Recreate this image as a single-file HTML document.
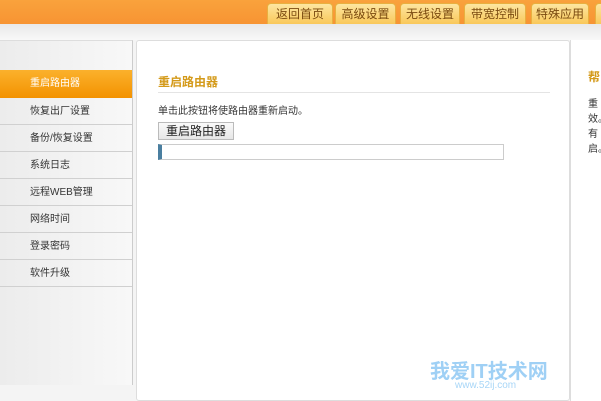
<!DOCTYPE html><html><head><meta charset="utf-8"><style>
*{margin:0;padding:0;box-sizing:border-box}
body{width:601px;height:401px;overflow:hidden;background:#f4f4f4;font-family:"Liberation Sans","Noto Sans CJK SC",sans-serif;font-size:11px;color:#333;position:relative}
.hd{position:absolute;left:0;top:0;width:601px;height:24px;background:linear-gradient(#f9a23c,#f79433)}
.tab{position:absolute;top:3px;height:21px;background:linear-gradient(#fde6a0,#f9c85a);border:1px solid #e8b040;border-bottom:none;border-radius:4px 4px 0 0;font-size:12px;color:#7a4a10;text-align:center;line-height:20px}
.bar{position:absolute;left:0;top:24px;width:601px;height:16px;background:linear-gradient(#e8e8e8,#f8f8f8)}
.side{position:absolute;left:0;top:40px;width:133px;height:345px;background:linear-gradient(90deg,#ececec,#f8f8f8);border-right:1px solid #ccc;border-top:1px solid #ddd}
.mi{position:absolute;left:0;width:132px;height:27px;border-bottom:1px solid #d0d0d0;line-height:27px;padding-left:30px;font-size:10px;color:#333}
.act{background:linear-gradient(#fbb12c,#f39200);color:#fff}
.main{position:absolute;left:136px;top:40px;width:434px;height:361px;background:#fff;border:1px solid #ddd;border-radius:3px}
.right{position:absolute;left:570px;top:40px;width:31px;height:361px;background:#fff;border-left:1px solid #ddd}
</style></head><body>
<div class="hd"></div>
<div class="tab" style="left:267px;width:66px">返回首页</div>
<div class="tab" style="left:335px;width:61px">高级设置</div>
<div class="tab" style="left:400px;width:60px">无线设置</div>
<div class="tab" style="left:464px;width:62px">带宽控制</div>
<div class="tab" style="left:531px;width:58px">特殊应用</div>
<div class="tab" style="left:595px;width:20px"></div>
<div class="bar"></div>
<div class="side">
<div class="mi act" style="top:29px;height:28px;border:none">重启路由器</div>
<div class="mi" style="top:57px">恢复出厂设置</div>
<div class="mi" style="top:84px">备份/恢复设置</div>
<div class="mi" style="top:111px">系统日志</div>
<div class="mi" style="top:138px">远程WEB管理</div>
<div class="mi" style="top:165px">网络时间</div>
<div class="mi" style="top:192px">登录密码</div>
<div class="mi" style="top:219px">软件升级</div>
</div>
<div class="main">
<div style="position:absolute;left:21px;top:32px;font-size:12px;color:#d49a1a;font-weight:bold">重启路由器</div>
<div style="position:absolute;left:21px;top:51px;width:392px;border-top:1px solid #e4e4e4"></div>
<div style="position:absolute;left:21px;top:61px;font-size:10px">单击此按钮将使路由器重新启动。</div>
<div style="position:absolute;left:21px;top:81px;width:76px;height:18px;border:1px solid #bbb;background:linear-gradient(#fafafa,#e6e6e6);font-size:12px;text-align:center;line-height:16px;color:#222">重启路由器</div>
<div style="position:absolute;left:21px;top:103px;width:346px;height:16px;border:1px solid #ccc;border-left:4px solid #4a7fa0"></div>
</div>
<div class="right">
<div style="position:absolute;left:17px;top:28px;font-size:12px;color:#d49a1a;font-weight:bold">帮</div>
<div style="position:absolute;left:17px;top:57px;font-size:10px;line-height:15px">重<br>效。<br>有<br>启。</div>
</div>
<div style="position:absolute;left:430px;top:355px;font-size:20px;font-weight:bold;color:#9fd0f5">我爱IT技术网</div>
<div style="position:absolute;left:455px;top:380px;font-size:10px;color:#a8d6f7">www.52ij.com</div>
</body></html>
